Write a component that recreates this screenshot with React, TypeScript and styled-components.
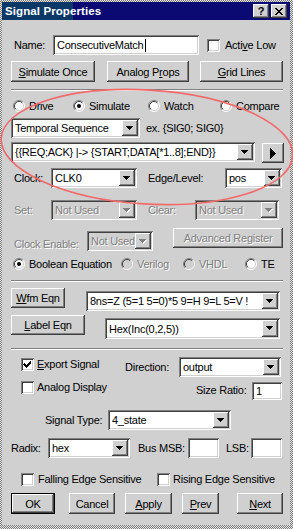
import React from 'react';
import styled, { createGlobalStyle, css } from 'styled-components';

const FACE = '#d0d0d0';

const Global = createGlobalStyle`
  html, body { margin: 0; padding: 0; background: ${FACE}; }
  body { font-family: 'Liberation Sans', Arial, sans-serif; font-size: 11px; letter-spacing: -0.25px; color: #000; }
  * { box-sizing: border-box; }
`;

const raised = css`
  background: ${FACE};
  box-shadow: inset -1px -1px #404040, inset 1px 1px #ffffff, inset -2px -2px #808080, inset 2px 2px ${FACE};
`;
const sunken = css`
  box-shadow: inset 1px 1px #808080, inset -1px -1px #ffffff, inset 2px 2px #404040, inset -2px -2px ${FACE};
`;
const disabledText = css`
  color: #808080;
  text-shadow: 1px 1px 0 #ffffff;
`;

const Frame = styled.div`
  position: relative;
  width: 293px;
  height: 529px;
  padding: 2px 3px 4px 2px;
  background: repeating-conic-gradient(#7a7a7a 0 25%, #e6e6e6 0 50%) 0 0 / 2px 2px;
`;

const Window = styled.div`
  height: 100%;
  background: ${FACE};
  display: flex;
  flex-direction: column;
`;

const TitleBar = styled.div`
  height: 18px;
  flex: none;
  display: flex;
  align-items: center;
  padding: 0 3px 0 3px;
  background: linear-gradient(to right, #0b3866 0 71px, #0a0a72 71px);
`;

const TitleText = styled.span`
  color: #fff;
  font-weight: bold;
  font-size: 11.5px;
  letter-spacing: 0.1px;
`;

const TitleButtons = styled.div`
  margin-left: auto;
  display: flex;
  gap: 2px;
`;

const TitleBtn = styled.span`
  ${raised};
  width: 16px;
  height: 14px;
  display: flex;
  align-items: center;
  justify-content: center;
  font-weight: bold;
  font-size: 11px;
  line-height: 1;
`;

const Body = styled.div`
  display: flex;
  flex-direction: column;
  padding-left: 9px;
`;

const Row = styled.div<{ $mt: number; $h: number; $align?: string }>`
  display: flex;
  flex: none;
  align-items: ${(p) => p.$align ?? 'center'};
  margin-top: ${(p) => p.$mt}px;
  height: ${(p) => p.$h}px;
`;

const Label = styled.span<{ $ml?: number; $w?: number; $mt?: number; $disabled?: boolean }>`
  flex: none;
  margin-left: ${(p) => p.$ml ?? 0}px;
  margin-top: ${(p) => p.$mt ?? 0}px;
  ${(p) => (p.$w ? `width: ${p.$w}px;` : '')}
  height: 13px;
  line-height: 13px;
  white-space: nowrap;
  ${(p) => (p.$disabled ? disabledText : '')}
`;

const U = styled.span`
  text-decoration: underline;
  text-underline-offset: 1px;
`;

const TextBox = styled.div<{ $w: number; $h: number; $ml?: number; $mt?: number }>`
  ${sunken};
  flex: none;
  background: #fff;
  width: ${(p) => p.$w}px;
  height: ${(p) => p.$h}px;
  margin-left: ${(p) => p.$ml ?? 0}px;
  margin-top: ${(p) => p.$mt ?? 0}px;
  padding: 0 4px;
  display: flex;
  align-items: center;
  white-space: nowrap;
`;

const Caret = styled.span`
  display: inline-block;
  width: 1px;
  height: 13px;
  background: #000;
  margin-left: 1px;
`;

const Combo = styled.div<{ $w: number; $h?: number; $ml?: number; $mt?: number; $disabled?: boolean }>`
  ${sunken};
  flex: none;
  background: ${(p) => (p.$disabled ? FACE : '#fff')};
  width: ${(p) => p.$w}px;
  height: ${(p) => p.$h ?? 20}px;
  margin-left: ${(p) => p.$ml ?? 0}px;
  margin-top: ${(p) => p.$mt ?? 0}px;
  padding: 2px;
  display: flex;
  align-items: stretch;
`;

const ComboText = styled.span<{ $disabled?: boolean }>`
  flex: 1;
  min-width: 0;
  padding-left: 2px;
  display: flex;
  align-items: center;
  overflow: hidden;
  white-space: nowrap;
  ${(p) => (p.$disabled ? disabledText : '')}
`;

const ArrowBtn = styled.span`
  ${raised};
  flex: none;
  width: 16px;
  display: flex;
  align-items: center;
  justify-content: center;
`;

const Button = styled.button<{ $w: number; $h?: number; $ml?: number; $mt?: number; $default?: boolean; $disabled?: boolean }>`
  ${raised};
  ${(p) =>
    p.$default
      ? `box-shadow: inset 0 0 0 1px #000, inset -2px -2px #404040, inset 2px 2px #fff, inset -3px -3px #808080;`
      : ''}
  flex: none;
  border: none;
  padding: 0;
  margin: 0;
  margin-left: ${(p) => p.$ml ?? 0}px;
  margin-top: ${(p) => p.$mt ?? 0}px;
  width: ${(p) => p.$w}px;
  height: ${(p) => p.$h ?? 21}px;
  font: inherit;
  letter-spacing: inherit;
  color: #000;
  display: flex;
  align-items: center;
  justify-content: center;
  white-space: nowrap;
  ${(p) => (p.$disabled ? disabledText : '')}
`;

const CheckBox = styled.span<{ $ml?: number; $mt?: number }>`
  ${sunken};
  flex: none;
  background: #fff;
  width: 13px;
  height: 13px;
  margin-left: ${(p) => p.$ml ?? 0}px;
  margin-top: ${(p) => p.$mt ?? 0}px;
  display: flex;
  align-items: center;
  justify-content: center;
`;

const Separator = styled.div<{ $mt: number }>`
  flex: none;
  width: 272px;
  height: 2px;
  margin-top: ${(p) => p.$mt}px;
  border-top: 1px solid #808080;
  border-bottom: 1px solid #fff;
`;

const RadioItem = styled.span<{ $w?: number; $ml?: number; $disabled?: boolean }>`
  flex: none;
  display: flex;
  align-items: center;
  gap: 4px;
  margin-left: ${(p) => p.$ml ?? 0}px;
  ${(p) => (p.$w ? `width: ${p.$w}px;` : '')}
  white-space: nowrap;
  ${(p) => (p.$disabled ? disabledText : '')}
`;

const PlayBtn = styled.span`
  ${raised};
  flex: none;
  width: 22px;
  height: 20px;
  margin-left: 7px;
  margin-top: 1px;
  display: flex;
  align-items: center;
  justify-content: center;
`;

const Overlay = styled.svg`
  position: absolute;
  left: 0;
  top: 0;
  pointer-events: none;
`;

const DownArrow = ({ disabled }: { disabled?: boolean }) => (
  <svg width="8" height="5" viewBox="0 0 8 5" shapeRendering="crispEdges">
    {disabled && <path d="M1 1h7v1h-1v1h-1v1h-1v1h-1v-1h-1v-1h-1v-1h-1z" fill="#fff" />}
    <path d="M0 0h7v1h-1v1h-1v1h-1v1h-1v-1h-1v-1h-1v-1h-1z" fill={disabled ? '#808080' : '#000'} />
  </svg>
);

const Radio = ({ checked, disabled }: { checked?: boolean; disabled?: boolean }) => (
  <svg width="12" height="12" viewBox="0 0 12 12" style={{ flex: 'none' }}>
    <circle cx="6" cy="6" r="5" fill={disabled ? FACE : '#fff'} />
    <path d="M2.1 9.9 A5.5 5.5 0 0 1 9.9 2.1" stroke="#808080" strokeWidth="1" fill="none" />
    <path d="M9.9 2.1 A5.5 5.5 0 0 1 2.1 9.9" stroke="#ffffff" strokeWidth="1" fill="none" />
    <path d="M2.8 9.2 A4.5 4.5 0 0 1 9.2 2.8" stroke="#404040" strokeWidth="1" fill="none" />
    <path d="M9.2 2.8 A4.5 4.5 0 0 1 2.8 9.2" stroke={FACE} strokeWidth="1" fill="none" />
    {checked && <circle cx="6" cy="6" r="2" fill="#000" />}
  </svg>
);

const CheckMark = () => (
  <svg width="9" height="9" viewBox="0 0 9 9" shapeRendering="crispEdges">
    <path d="M1 3h1v1h1v1h1v-1h1v-1h1v-1h1v-1h1v3h-1v1h-1v1h-1v1h-1v1h-1v-1h-1v-1h-1v-1h-1z" fill="#000" />
  </svg>
);

type ComboProps = { w: number; h?: number; ml?: number; mt?: number; disabled?: boolean; children?: React.ReactNode };
const ComboBox = ({ w, h, ml, mt, disabled, children }: ComboProps) => (
  <Combo $w={w} $h={h} $ml={ml} $mt={mt} $disabled={disabled}>
    <ComboText $disabled={disabled}>{children}</ComboText>
    <ArrowBtn>
      <DownArrow disabled={disabled} />
    </ArrowBtn>
  </Combo>
);

export default function App() {
  return (
    <>
      <Global />
      <Frame>
        <Window>
          <TitleBar>
            <TitleText>Signal Properties</TitleText>
            <TitleButtons>
              <TitleBtn>?</TitleBtn>
              <TitleBtn>
                <svg width="8" height="7" viewBox="0 0 8 7" shapeRendering="crispEdges">
                  <path d="M0 0h2v1h1v1h2v-1h1v-1h2v1h-1v1h-1v1h-1v1h1v1h1v1h1v1h-2v-1h-1v-1h-2v1h-1v1h-2v-1h1v-1h1v-1h1v-1h-1v-1h-1v-1h-1z" fill="#000" />
                </svg>
              </TitleBtn>
            </TitleButtons>
          </TitleBar>
          <Body>
            <Row $mt={15} $h={20}>
              <Label $ml={3} $w={39}>Name:</Label>
              <TextBox $w={146} $h={20}>
                ConsecutiveMatch
                <Caret />
              </TextBox>
              <CheckBox $ml={8} />
              <Label $ml={5}>
                Acti<U>v</U>e Low
              </Label>
            </Row>
            <Row $mt={6} $h={21}>
              <Button $w={84}>
                <U>S</U>imulate Once
              </Button>
              <Button $w={82} $ml={12}>
                Analog P<U>r</U>ops
              </Button>
              <Button $w={83} $ml={11}>
                <U>G</U>rid Lines
              </Button>
            </Row>
            <Separator $mt={7} />
            <Row $mt={8} $h={13}>
              <RadioItem $ml={2} $w={60}>
                <Radio />
                Drive
              </RadioItem>
              <RadioItem $w={75}>
                <Radio checked />
                Simulate
              </RadioItem>
              <RadioItem $w={72}>
                <Radio />
                Watch
              </RadioItem>
              <RadioItem>
                <Radio />
                Compare
              </RadioItem>
            </Row>
            <Row $mt={6} $h={20}>
              <ComboBox w={129}>Temporal Sequence</ComboBox>
              <Label $ml={6}>ex. {'{SIG0; SIG0}'}</Label>
            </Row>
            <Row $mt={4} $h={21} $align="flex-start">
              <ComboBox w={244}>{'{{REQ;ACK} |-> {START;DATA[*1..8];END}}'}</ComboBox>
              <PlayBtn>
                <svg width="6" height="11" viewBox="0 0 6 11" shapeRendering="crispEdges">
                  <path d="M0 0h1v1h1v1h1v1h1v1h1v1h1v1h-1v1h-1v1h-1v1h-1v1h-1v1h-1z" fill="#000" />
                </svg>
              </PlayBtn>
            </Row>
            <Row $mt={5} $h={20}>
              <Label $ml={3} $w={37}>Clock:</Label>
              <ComboBox w={86}>CLK0</ComboBox>
              <Label $ml={11} $w={77}>Edge/Level:</Label>
              <ComboBox w={57}>pos</ComboBox>
            </Row>
            <Row $mt={12} $h={20}>
              <Label $ml={3} $w={37} $disabled>Set:</Label>
              <ComboBox w={86} disabled>Not Used</ComboBox>
              <Label $ml={11} $w={47} $disabled>Clear:</Label>
              <ComboBox w={84} disabled>Not Used</ComboBox>
            </Row>
            <Row $mt={8} $h={22} $align="flex-start">
              <Label $ml={3} $w={73} $mt={10} $disabled>Clock Enable:</Label>
              <ComboBox w={66} mt={3} disabled>Not Used</ComboBox>
              <Button $w={110} $h={20} $ml={20} $disabled>Advanced Register</Button>
            </Row>
            <Row $mt={7} $h={13}>
              <RadioItem $ml={2} $w={108}>
                <Radio checked />
                Boolean Equation
              </RadioItem>
              <RadioItem $w={62} $disabled>
                <Radio disabled />
                Verilog
              </RadioItem>
              <RadioItem $w={62} $disabled>
                <Radio disabled />
                VHDL
              </RadioItem>
              <RadioItem>
                <Radio />
                TE
              </RadioItem>
            </Row>
            <Separator $mt={10} />
            <Row $mt={6} $h={22} $align="flex-start">
              <Button $w={54} $h={20}>
                <U>W</U>fm Eqn
              </Button>
              <ComboBox w={194} ml={21} mt={3}>8ns=Z (5=1 5=0)*5 9=H 9=L 5=V !</ComboBox>
            </Row>
            <Row $mt={5} $h={24} $align="flex-start">
              <Button $w={74} $h={20}>
                <U>L</U>abel Eqn
              </Button>
              <ComboBox w={175} h={21} ml={20} mt={3}>Hex(Inc(0,2,5))</ComboBox>
            </Row>
            <Separator $mt={9} />
            <Row $mt={7} $h={20} $align="flex-start">
              <CheckBox $ml={10} $mt={1}>
                <CheckMark />
              </CheckBox>
              <Label $ml={3} $w={88} $mt={1}>
                <U>E</U>xport Signal
              </Label>
              <Label $w={54} $mt={4}>Direction:</Label>
              <ComboBox w={102}>output</ComboBox>
            </Row>
            <Row $mt={4} $h={19} $align="flex-start">
              <CheckBox $ml={10} />
              <Label $ml={3} $w={159} $mt={0}>Analog Display</Label>
              <Label $w={56} $mt={3}>Size Ratio:</Label>
              <TextBox $w={30} $h={18} $mt={1}>1</TextBox>
            </Row>
            <Row $mt={10} $h={20}>
              <Label $ml={34} $w={63}>Signal Type:</Label>
              <ComboBox w={123}>4_state</ComboBox>
            </Row>
            <Row $mt={8} $h={20}>
              <Label $w={37}>Radix:</Label>
              <ComboBox w={82}>hex</ComboBox>
              <Label $ml={8} $w={50}>Bus MSB:</Label>
              <TextBox $w={31} $h={20} />
              <Label $ml={7} $w={25}>LSB:</Label>
              <TextBox $w={31} $h={20} />
            </Row>
            <Row $mt={15} $h={13}>
              <CheckBox $ml={10} />
              <Label $ml={4} $w={119}>Falling Edge Sensitive</Label>
              <CheckBox />
              <Label $ml={3}>Rising Edge Sensitive</Label>
            </Row>
            <Row $mt={7} $h={21}>
              <Button $w={44} $default>OK</Button>
              <Button $w={46} $ml={14}>Cancel</Button>
              <Button $w={47} $ml={10}>
                <U>A</U>pply
              </Button>
              <Button $w={37} $ml={10}>
                <U>P</U>rev
              </Button>
              <Button $w={46} $ml={18}>
                <U>N</U>ext
              </Button>
            </Row>
          </Body>
        </Window>
        <Overlay width="293" height="529" viewBox="0 0 293 529">
          <ellipse
            cx="147"
            cy="147"
            rx="146"
            ry="57"
            transform="rotate(3.5 147 147)"
            fill="none"
            stroke="#f26b6b"
            strokeWidth="1.6"
          />
        </Overlay>
      </Frame>
    </>
  );
}
